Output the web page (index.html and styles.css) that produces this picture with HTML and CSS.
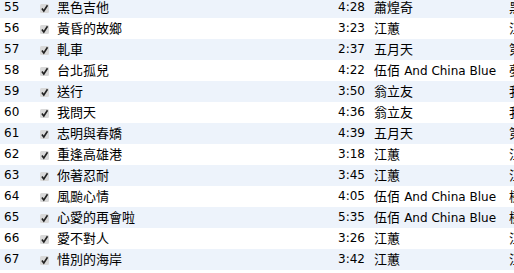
FILE: index.html
```html
<!DOCTYPE html>
<html>
<head>
<meta charset="utf-8">
<link rel="stylesheet" href="styles.css">
</head>
<body>
<div class="list">
  <div class="row odd"><span class="num">55</span><span class="chk"><svg viewBox="0 0 9 9" width="9" height="9"><rect width="9" height="9" rx="1.5" fill="#d9d9d9"/><path d="M1.9 4.5 L3.8 7 L7.5 1.3" fill="none" stroke="#222" stroke-width="1.6"/></svg></span><span class="title">黑色吉他</span><span class="time">4:28</span><span class="artist">蕭煌奇</span><span class="album">黑色吉他</span></div>
  <div class="row"><span class="num">56</span><span class="chk"><svg viewBox="0 0 9 9" width="9" height="9"><rect width="9" height="9" rx="1.5" fill="#d9d9d9"/><path d="M1.9 4.5 L3.8 7 L7.5 1.3" fill="none" stroke="#222" stroke-width="1.6"/></svg></span><span class="title">黃昏的故鄉</span><span class="time">3:23</span><span class="artist">江蕙</span><span class="album">江蕙精選</span></div>
  <div class="row odd"><span class="num">57</span><span class="chk"><svg viewBox="0 0 9 9" width="9" height="9"><rect width="9" height="9" rx="1.5" fill="#d9d9d9"/><path d="M1.9 4.5 L3.8 7 L7.5 1.3" fill="none" stroke="#222" stroke-width="1.6"/></svg></span><span class="title">軋車</span><span class="time">2:37</span><span class="artist">五月天</span><span class="album">第一張創作專輯</span></div>
  <div class="row"><span class="num">58</span><span class="chk"><svg viewBox="0 0 9 9" width="9" height="9"><rect width="9" height="9" rx="1.5" fill="#d9d9d9"/><path d="M1.9 4.5 L3.8 7 L7.5 1.3" fill="none" stroke="#222" stroke-width="1.6"/></svg></span><span class="title">台北孤兒</span><span class="time">4:22</span><span class="artist">伍佰 <span class="latin">And China Blue</span></span><span class="album">夢的河流</span></div>
  <div class="row odd"><span class="num">59</span><span class="chk"><svg viewBox="0 0 9 9" width="9" height="9"><rect width="9" height="9" rx="1.5" fill="#d9d9d9"/><path d="M1.9 4.5 L3.8 7 L7.5 1.3" fill="none" stroke="#222" stroke-width="1.6"/></svg></span><span class="title">送行</span><span class="time">3:50</span><span class="artist">翁立友</span><span class="album">我問天</span></div>
  <div class="row"><span class="num">60</span><span class="chk"><svg viewBox="0 0 9 9" width="9" height="9"><rect width="9" height="9" rx="1.5" fill="#d9d9d9"/><path d="M1.9 4.5 L3.8 7 L7.5 1.3" fill="none" stroke="#222" stroke-width="1.6"/></svg></span><span class="title">我問天</span><span class="time">4:36</span><span class="artist">翁立友</span><span class="album">我問天</span></div>
  <div class="row odd"><span class="num">61</span><span class="chk"><svg viewBox="0 0 9 9" width="9" height="9"><rect width="9" height="9" rx="1.5" fill="#d9d9d9"/><path d="M1.9 4.5 L3.8 7 L7.5 1.3" fill="none" stroke="#222" stroke-width="1.6"/></svg></span><span class="title">志明與春嬌</span><span class="time">4:39</span><span class="artist">五月天</span><span class="album">第一張創作專輯</span></div>
  <div class="row"><span class="num">62</span><span class="chk"><svg viewBox="0 0 9 9" width="9" height="9"><rect width="9" height="9" rx="1.5" fill="#d9d9d9"/><path d="M1.9 4.5 L3.8 7 L7.5 1.3" fill="none" stroke="#222" stroke-width="1.6"/></svg></span><span class="title">重逢高雄港</span><span class="time">3:18</span><span class="artist">江蕙</span><span class="album">江蕙精選</span></div>
  <div class="row odd"><span class="num">63</span><span class="chk"><svg viewBox="0 0 9 9" width="9" height="9"><rect width="9" height="9" rx="1.5" fill="#d9d9d9"/><path d="M1.9 4.5 L3.8 7 L7.5 1.3" fill="none" stroke="#222" stroke-width="1.6"/></svg></span><span class="title">你著忍耐</span><span class="time">3:45</span><span class="artist">江蕙</span><span class="album">江蕙精選</span></div>
  <div class="row"><span class="num">64</span><span class="chk"><svg viewBox="0 0 9 9" width="9" height="9"><rect width="9" height="9" rx="1.5" fill="#d9d9d9"/><path d="M1.9 4.5 L3.8 7 L7.5 1.3" fill="none" stroke="#222" stroke-width="1.6"/></svg></span><span class="title">風颱心情</span><span class="time">4:05</span><span class="artist">伍佰 <span class="latin">And China Blue</span></span><span class="album">樹枝孤鳥</span></div>
  <div class="row odd"><span class="num">65</span><span class="chk"><svg viewBox="0 0 9 9" width="9" height="9"><rect width="9" height="9" rx="1.5" fill="#d9d9d9"/><path d="M1.9 4.5 L3.8 7 L7.5 1.3" fill="none" stroke="#222" stroke-width="1.6"/></svg></span><span class="title">心愛的再會啦</span><span class="time">5:35</span><span class="artist">伍佰 <span class="latin">And China Blue</span></span><span class="album">樹枝孤鳥</span></div>
  <div class="row"><span class="num">66</span><span class="chk"><svg viewBox="0 0 9 9" width="9" height="9"><rect width="9" height="9" rx="1.5" fill="#d9d9d9"/><path d="M1.9 4.5 L3.8 7 L7.5 1.3" fill="none" stroke="#222" stroke-width="1.6"/></svg></span><span class="title">愛不對人</span><span class="time">3:26</span><span class="artist">江蕙</span><span class="album">江蕙精選</span></div>
  <div class="row odd"><span class="num">67</span><span class="chk"><svg viewBox="0 0 9 9" width="9" height="9"><rect width="9" height="9" rx="1.5" fill="#d9d9d9"/><path d="M1.9 4.5 L3.8 7 L7.5 1.3" fill="none" stroke="#222" stroke-width="1.6"/></svg></span><span class="title">惜別的海岸</span><span class="time">3:42</span><span class="artist">江蕙</span><span class="album">江蕙精選</span></div>
</div>
</body>
</html>
```

FILE: styles.css
```css
html, body {
  margin: 0;
  padding: 0;
  background: #ffffff;
  overflow: hidden;
}
body {
  width: 514px;
  height: 273px;
  font-family: "DejaVu Sans", "Noto Sans CJK TC", sans-serif;
  font-size: 12px;
  color: #000000;
}
.list {
  margin-top: -3px;
  display: flex;
  flex-direction: column;
}
.row {
  display: grid;
  grid-template-columns: 36px 17px 258px 50px 144px 1fr;
  height: 21px;
  line-height: 21px;
  padding-left: 4px;
  white-space: nowrap;
  overflow: hidden;
  background: #ffffff;
}
.row.odd {
  background: #edf3fb;
}
.chk {
  display: flex;
  align-items: center;
}
.chk svg {
  display: block;
  margin-top: 1px;
}
.title {
  font-size: 13px;
}
.time {
  text-align: right;
}
.artist {
  padding-left: 9px;
  font-size: 13px;
  overflow: hidden;
}
.latin {
  font-size: 12px;
}
.album {
  font-size: 13px;
  overflow: hidden;
}
```
